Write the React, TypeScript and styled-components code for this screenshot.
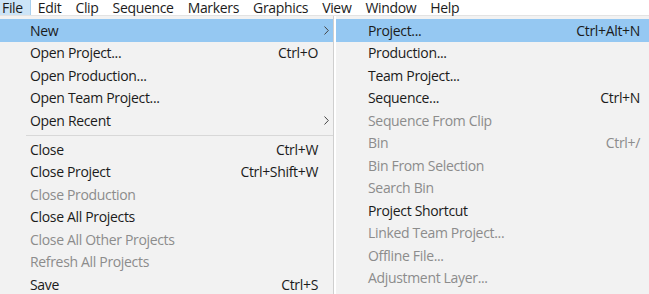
import styled, { createGlobalStyle } from "styled-components"

const GlobalStyle = createGlobalStyle`
  html, body {
    margin: 0;
    padding: 0;
    background: #ffffff;
    overflow: hidden;
  }
  body {
    font-family: "Open Sans", "Noto Sans", sans-serif;
    font-size: 14px;
    letter-spacing: -0.33px;
    color: #1b1b1b;
  }
`

type Item = {
  label?: string
  shortcut?: string
  disabled?: boolean
  submenu?: boolean
  active?: boolean
  separator?: boolean
}

const menuBar = ["File", "Edit", "Clip", "Sequence", "Markers", "Graphics", "View", "Window", "Help"]

const fileItems: Item[] = [
  { label: "New", submenu: true, active: true },
  { label: "Open Project...", shortcut: "Ctrl+O" },
  { label: "Open Production..." },
  { label: "Open Team Project..." },
  { label: "Open Recent", submenu: true },
  { separator: true },
  { label: "Close", shortcut: "Ctrl+W" },
  { label: "Close Project", shortcut: "Ctrl+Shift+W" },
  { label: "Close Production", disabled: true },
  { label: "Close All Projects" },
  { label: "Close All Other Projects", disabled: true },
  { label: "Refresh All Projects", disabled: true },
  { label: "Save", shortcut: "Ctrl+S" },
]

const newItems: Item[] = [
  { label: "Project...", shortcut: "Ctrl+Alt+N", active: true },
  { label: "Production..." },
  { label: "Team Project..." },
  { label: "Sequence...", shortcut: "Ctrl+N" },
  { label: "Sequence From Clip", disabled: true },
  { label: "Bin", shortcut: "Ctrl+/", disabled: true },
  { label: "Bin From Selection", disabled: true },
  { label: "Search Bin", disabled: true },
  { label: "Project Shortcut" },
  { label: "Linked Team Project...", disabled: true },
  { label: "Offline File...", disabled: true },
  { label: "Adjustment Layer...", disabled: true },
]

export default function App() {
  return (
    <>
      <GlobalStyle />
      <MenuBar>
        {menuBar.map((name) => (
          <BarItem key={name} $open={name === "File"}>
            {name}
          </BarItem>
        ))}
      </MenuBar>
      <Menus>
        <FileMenu>
          {fileItems.map((item, i) =>
            item.separator ? (
              <Separator key={i} />
            ) : (
              <FileRow key={i} $active={item.active} $disabled={item.disabled}>
                <span>{item.label}</span>
                <Shortcut>{item.shortcut}</Shortcut>
                <Arrow>{item.submenu ? <ChevronIcon /> : null}</Arrow>
              </FileRow>
            )
          )}
        </FileMenu>
        <SubMenu>
          {newItems.map((item, i) => (
            <SubRow key={i} $active={item.active} $disabled={item.disabled}>
              <span>{item.label}</span>
              <Shortcut>{item.shortcut}</Shortcut>
            </SubRow>
          ))}
        </SubMenu>
      </Menus>
    </>
  )
}

function ChevronIcon() {
  return (
    <svg width="5" height="9" viewBox="0 0 5 9">
      <path d="M0.5 0.5 L4.3 4.5 L0.5 8.5" fill="none" stroke="#444" strokeWidth="1" />
    </svg>
  )
}

const MenuBar = styled.div`
  display: flex;
  height: 15px;
  background: #ffffff;
  border-bottom: 1px solid #e3e3e3;
`

const BarItem = styled.div<{ $open?: boolean }>`
  padding: 0 6px;
  margin-right: 1px;
  line-height: 15px;
  height: 15px;
  color: #1b1b1b;
  background: ${(p) => (p.$open ? "#cce4f7" : "transparent")};
  border-right: 1px solid ${(p) => (p.$open ? "#a8d0ef" : "transparent")};
  &:first-child {
    padding-left: 2px;
    padding-right: 7px;
  }
`

const Menus = styled.div`
  display: flex;
  align-items: flex-start;
`

const FileMenu = styled.div`
  width: 333px;
  height: 278px;
  background: #f2f2f2;
  border-right: 1px solid #cfcfcf;
  padding-top: 3px;
  flex-shrink: 0;
  overflow: hidden;
`

const SubMenu = styled.div`
  flex: 1;
  height: 278px;
  margin-left: 2px;
  background: #f2f2f2;
  padding-top: 3px;
  overflow: hidden;
`

const Row = styled.div<{ $active?: boolean; $disabled?: boolean }>`
  display: grid;
  align-items: center;
  height: 22.5px;
  white-space: nowrap;
  color: ${(p) => (p.$disabled ? "#8c8c8c" : "#1b1b1b")};
  background: ${(p) => (p.$active ? "#95c8f2" : "transparent")};
`

const FileRow = styled(Row)`
  grid-template-columns: 1fr auto 15px;
  padding-left: 30px;
`

const SubRow = styled(Row)`
  grid-template-columns: 1fr auto;
  padding-left: 32px;
  padding-right: 9px;
`

const Shortcut = styled.span`
  text-align: right;
`

const Arrow = styled.span`
  display: flex;
  justify-content: center;
  align-items: center;
  padding-left: 2px;
`

const Separator = styled.div`
  height: 1px;
  margin: 3px 0 2.5px 26px;
  background: #d8d8d8;
`
